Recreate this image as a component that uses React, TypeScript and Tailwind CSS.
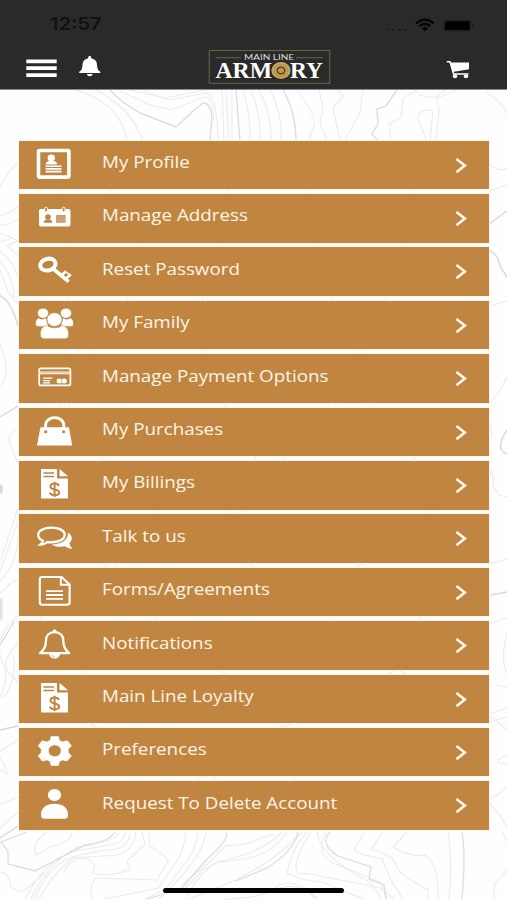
import type { ReactNode } from 'react';

const BROWN = '#c08540';

function Invoice() {
  return (
    <>
      <path d="M41 8H57V17.5H68V37.5H41Z" fill="#fff" />
      <path d="M59.5 8V15.3H68Z" fill="#fff" />
      <path d="M43.5 12H54M43.5 15.5H54" stroke={BROWN} strokeWidth="1.3" />
      <path d="M58.8 24.8C58.2 23.2 56.8 22.6 54.8 22.6C52.2 22.6 50.4 23.6 50.4 25.4C50.4 27.2 52 27.8 54.7 28.4C57.6 29 59.2 29.6 59.2 31.4C59.2 33.2 57.2 34.2 54.6 34.2C52 34.2 50.5 33.2 49.9 31.6M54.6 20.7V36" fill="none" stroke={BROWN} strokeWidth="2" />
    </>
  );
}

const icons: Record<string, ReactNode> = {
  profile: (
    <>
      <rect x="38.500" y="9.500" width="30.400" height="26.600" rx="1" fill="none" stroke="#fff" strokeWidth="3.600" />
      <ellipse cx="51.300" cy="16.900" rx="3.700" ry="3.300" fill="#fff" />
      <path d="M45.600 23.600C45.800 20.600 48 20.200 49.700 20L49.800 18H52.800L53 20C55.500 20.200 57 20.800 57.200 23.600Z" fill="#fff" />
      <path d="M45.600 25.200H61.500M45.600 27.900H61.500M45.600 30.600H61.500" stroke="#fff" strokeWidth="1.600" />
    </>
  ),
  address: (
    <>
      <rect x="39" y="15" width="31.500" height="17.600" rx="2" fill="#fff" />
      <rect x="44.700" y="13.400" width="2.800" height="4.400" rx="1.200" fill={BROWN} stroke="#fff" />
      <rect x="62.200" y="13.400" width="2.800" height="4.400" rx="1.200" fill={BROWN} stroke="#fff" />
      <ellipse cx="48" cy="23" rx="2.800" ry="2.700" fill={BROWN} />
      <path d="M43.600 28.700C44 26 46 26.200 46.800 25.600H49.200C50 26.200 52 26 52.400 28.700Z" fill={BROWN} />
      <rect x="56" y="21" width="9.600" height="7.800" fill="#c99d6b" />
      <path d="M56 23H65.600M56 25H65.600M56 27H65.600" stroke="#d7b48d" strokeWidth=".6" />
    </>
  ),
  key: (
    <g fill="none" stroke="#fff">
      <ellipse cx="47.900" cy="17.600" rx="7.800" ry="5.800" strokeWidth="4" transform="rotate(-15 47.900 17.600)" />
      <path d="M52.500 21.300L68.600 34.600" strokeWidth="3.700" />
      <path d="M61.500 28.200L66 24.400M66 31.500L70.600 27.500" strokeWidth="2.700" />
      <path d="M64.600 24L71.200 28.900" strokeWidth="1.400" />
    </g>
  ),
  family: (
    <g fill="#fff">
      <ellipse cx="43" cy="12.200" rx="5.300" ry="4.800" />
      <ellipse cx="66" cy="12.200" rx="5.300" ry="4.800" />
      <path d="M38.600 17.300C40.800 19 44.500 18.600 46 17L48 25.200H37.500C34.800 25.200 35.300 18.500 38.600 17.300ZM70.400 17.300C68.200 19 64.500 18.600 63 17L61 25.200H71.500C74.200 25.200 73.700 18.500 70.400 17.300Z" />
      <ellipse cx="54.500" cy="18.600" rx="7.700" ry="7" stroke={BROWN} strokeWidth=".9" />
      <path d="M47 24.500C51 27.600 58 27.600 62 24.500C67 25 68.800 29 68.600 33.800C68.500 36.400 67 37.700 65 37.700H44C42 37.700 40.500 36.400 40.400 33.800C40.200 29 42 25 47 24.500Z" stroke={BROWN} strokeWidth=".5" />
    </g>
  ),
  card: (
    <>
      <rect x="39.200" y="14.400" width="31.200" height="17" rx="2" fill="none" stroke="#fff" strokeWidth="1.700" />
      <path d="M39.200 18.900H70.200" stroke="#fff" strokeWidth="2.700" />
      <path d="M39.200 18.900H70.200" stroke={BROWN} strokeWidth=".6" />
      <path d="M43 24.200H52.400M43 26.600H50M43 28.800H50" stroke="#fff" strokeWidth="1.200" />
      <ellipse cx="59.500" cy="26.900" rx="3" ry="2.500" fill="#fff" />
      <ellipse cx="64" cy="26.900" rx="3" ry="2.500" fill="#fff" />
      <path d="M61.700 24.500V29.200" stroke={BROWN} strokeWidth=".6" />
    </>
  ),
  bag: (
    <>
      <path d="M40.500 19.200H69L72.200 37.400H37Z" fill="#fff" />
      <path d="M45.600 23V17.500C45.600 7 63.800 7 63.800 17.500V23" fill="none" stroke="#fff" strokeWidth="2.900" />
      <ellipse cx="45.700" cy="23.700" rx="1.700" ry="1.500" fill={BROWN} />
      <ellipse cx="63.600" cy="23.700" rx="1.700" ry="1.500" fill={BROWN} />
    </>
  ),
  invoice: <Invoice />,
  talk: (
    <>
      <path d="M67.800 18.500C72 21 73.400 25 69.500 29.200C69.600 31.500 71 32.800 72.300 34.600C69.500 35 66.300 33.500 64.800 32.300C60 33.300 54.800 32.800 51.600 30.400C60.500 30.500 69 26.200 67.800 18.500Z" fill="#fff" />
      <path d="M51.200 13.700C43.500 13.700 38.200 16.500 38.200 20.800C38.200 23.400 39.800 25.500 43 26.800C42.800 28.400 41.700 29.500 40.400 30.500C43.500 30.700 46 29.300 47.500 28C58 29.200 64.700 25.600 64.700 20.800C64.700 16.500 59.200 13.700 51.200 13.700Z" fill="none" stroke="#fff" strokeWidth="2.300" />
    </>
  ),
  form: (
    <g fill="none" stroke="#fff">
      <path d="M42 9H61.500L69.600 16.500V34.600Q69.600 36.700 67.200 36.700H42.200Q39.800 36.700 39.800 34.600V11Q39.800 9 42 9Z" strokeWidth="2.100" />
      <path d="M60.800 9.200V16.700H69.500" strokeWidth="1.900" />
      <path d="M46 23.200H63M46 27H63M46 30.800H63" strokeWidth="1.800" />
    </g>
  ),
  bell: (
    <>
      <path d="M54.600 11.100C49 11.100 46 14.800 46 19.200C46 25.400 44.500 28.900 40 32.200H69.200C64.800 28.900 63.300 25.400 63.300 19.200C63.300 14.800 60.300 11.100 54.600 11.100Z" fill="none" stroke="#fff" strokeWidth="2.300" strokeLinejoin="round" />
      <path d="M52.800 11V9.800Q52.800 8.400 54.600 8.400Q56.400 8.400 56.400 9.800V11ZM49.300 33H60C60 35.600 57.700 37.600 54.600 37.600C51.500 37.600 49.300 35.600 49.300 33Z" fill="#fff" />
      <path d="M52 34.200Q52.400 35.600 54.300 35.800" fill="none" stroke={BROWN} strokeWidth=".6" />
    </>
  ),
  gear: (
    <path
      fill="#fff"
      stroke="#fff"
      strokeWidth=".6"
      strokeLinejoin="round"
      fillRule="evenodd"
      d="M51.100 8.400H58.400L59.400 12.400L62.500 13.900L67.300 12.700L71.400 17.800L68.200 21.200V24.500L71.400 27.800L67.300 33L62.500 31.900L59.400 33.400L58.400 37.400H51.100L50.100 33.400L47 31.900L42.200 33L38.200 27.800L41.300 24.500V21.200L38.200 17.800L42.200 12.700L47 13.900L50.100 12.400ZM54.800 16.900C51.200 16.900 48.400 19.500 48.400 22.800C48.400 26.100 51.200 28.700 54.800 28.700C58.400 28.700 61.200 26.100 61.200 22.800C61.200 19.500 58.400 16.900 54.800 16.900Z"
    />
  ),
  person: (
    <g fill="#fff">
      <ellipse cx="54.500" cy="13.900" rx="6.700" ry="6" />
      <path d="M41 34.200C41 26.500 46.500 22.800 54.500 22.800C62.500 22.800 68 26.500 68 34.200Q68 37.700 64.300 37.700H44.700Q41 37.700 41 34.200Z" />
    </g>
  ),
};

const rows = [
  ['profile', 'My Profile'],
  ['address', 'Manage Address'],
  ['key', 'Reset Password'],
  ['family', 'My Family'],
  ['card', 'Manage Payment Options'],
  ['bag', 'My Purchases'],
  ['invoice', 'My Billings'],
  ['talk', 'Talk to us'],
  ['form', 'Forms/Agreements'],
  ['bell', 'Notifications'],
  ['invoice', 'Main Line Loyalty'],
  ['gear', 'Preferences'],
  ['person', 'Request To Delete Account'],
];

function Contours() {
  return (
    <svg className="absolute inset-0" width="507" height="900" viewBox="0 0 507 900" fill="none" stroke="#ebebeb" strokeWidth="1.1">
      {/* top band */}
      <path d="M76 90C100 97 121 112 127 139M96 90C120 103 135 118 143 141M130 90L165 98L205 90M143 90L168 100L207 93Q217 95 218 141M118 90L150 105L171 110L205 97Q213 98 214 120M226 90L229 141M232 90V141M222 90L224 141M243 90Q251 115 250 141M250 90Q261 110 260 141M259 90Q272 115 271 141M270 90Q283 115 281 141M297 90Q318 118 314 125L309 141M319 90L323 107L320 123L327 141M337 90L343 96L333 108L340 141M363 90L360 112L345 141M417 90L403 98L401 117L390 124V141M445 90L435 98L418 95M457 90L437 98L439 110L436 141M432 110Q417 109 418 120L427 141M433 110L430 141M486 92Q504 103 509 118" />
      <path d="M110 90Q122 103 140 113L176 127L192 112L203 103Q211 103 212 118L210 141M236 90L240 141M283 90Q296 112 296 141M397 90L386 106L377 109L378 124L372 134L378 141" stroke="#dddddd" strokeWidth="1.4" />
      {/* left margin */}
      <path d="M-2 188C7 181 6 170 19 162M-2 216Q8 215 19 206M-2 225Q12 226 19 218M0 233L19 241M-2 243L12 238M19 240L7 246L19 257M0 251Q14 262 19 280M0 260Q14 278 14 298M0 270L8 292L19 305M0 344Q10 370 4 382L0 385M19 429Q8 432 9 441L19 466M0 571L18 522M0 582Q18 560 18 538M0 562L18 508M0 594Q12 580 18 580M0 698Q7 685 6 660L19 640M3 698Q18 680 13 655M0 751L18 740M0 758Q4 764 8 774L0 770M0 804L18 797M0 828L18 812" />
      <path d="M-1 295Q11 300 18 326M0 417L18 406M0 645L14 622M0 730L18 726M0 838L18 826" stroke="#d8d8d8" strokeWidth="1.4" />
      <ellipse cx="0" cy="489" rx="3" ry="5" fill="#dadada" stroke="none" />
      <path d="M0 600H1V618H0" stroke="#e2e2e2" strokeWidth="3" />
      {/* right margin */}
      <path d="M489 164Q500 173 507 168M489 191L507 185M489 306L507 301M489 404L500 391L507 377M489 416L492 438M489 468L495 480M492 470L493 486L499 495L507 497M489 564L507 559M489 624L507 618M507 633Q500 660 507 674M497 685L507 688M489 714L507 708M489 722L507 717M507 755Q489 763 507 764M489 803Q502 815 507 829" />
      <path d="M489 224L507 211M489 250Q498 254 500 266L507 277M507 430Q494 450 507 454M491 595L507 592" stroke="#d8d8d8" strokeWidth="1.4" />
      {/* lines that show between the rows */}
      <path d="M216 141Q245 200 212 270T240 430T170 530T220 670T160 830M320 141Q290 240 340 310T270 470T340 590T300 720T330 830M110 190Q170 260 100 340T120 470T60 590T130 740T100 830M400 141Q430 230 380 310T405 450T370 560T440 690T410 830M60 190Q80 350 45 480T70 660T50 780" />
      {/* bottom band */}
      <path d="M72 832Q72 842 53 846L36 855Q32 845 40 838L47 832M125 833Q123 844 109 845L81 850Q48 855 25 899M130 834Q128 850 106 850L80 855Q50 860 35 899M119 833Q112 843 78 847Q50 860 31 899M136 832Q134 850 118 855L73 858Q57 868 39 899M142 832L145 844L127 861L130 869Q110 878 92 873L95 866Q92 858 80 858Q68 862 64 872M149 832V845L163 855L168 861L157 880L95 878Q90 885 91 899M186 832Q184 850 177 861L158 888L105 899M198 832Q195 852 186 862L166 889L145 899M206 832Q205 850 178 880L159 899M287 832Q275 851 249 858L215 863Q193 880 187 899M282 832Q260 854 220 861L203 870L180 893M273 834L246 844L225 846L211 861L182 885M302 832Q285 850 263 865L236 880L190 899M307 832Q291 849 287 873L301 879L325 883L363 899M311 832Q292 860 297 873L310 874L380 888L394 899M317 832Q321 858 370 882L382 899M326 832Q315 855 333 863L355 872L380 882L387 899M364 833L354 849L358 853L382 859L391 880L403 899M382 832L372 849L391 857L401 873Q420 887 428 889L428 899M407 832L393 847Q408 857 425 855Q439 864 438 899M448 832Q453 866 449 899M507 870L494 885V899M0 872Q10 873 10 886L20 892Q27 890 44 873M225 899Q265 899 279 885Q292 880 306 889L318 899M270 892Q297 878 315 899M503 832L507 842" />
      <path d="M115 832Q109 842 85 845L35 871L8 864V851L1 842L27 832M226 832Q230 839 207 859L181 889L147 899M298 832Q295 850 267 868L236 881M330 832Q319 844 338 856L371 867L369 879L384 885L386 899M462 832Q466 855 462 899" stroke="#dddddd" strokeWidth="1.3" />
    </svg>
  );
}

function Header() {
  return (
    <header className="relative h-[90px] border-b border-[#8b8b8b] bg-[#2a2a2a]">
      <div className="flex h-[49px] items-center justify-between pl-[49.500px] pr-[31px]">
        <span className="block w-[46px] origin-left scale-x-[1.180] font-['Inter',sans-serif] text-[17px] font-semibold leading-none text-[#101010]">
          12:57
        </span>
        <svg width="94" height="20" viewBox="382 14 94 20">
          <g fill="#1b1b1b">
            <circle cx="387" cy="29" r="1.1" />
            <circle cx="393" cy="29" r="1.1" />
            <circle cx="399.500" cy="29" r="1.1" />
            <circle cx="405.500" cy="29" r="1.1" />
          </g>
          <path d="M416 22.300Q424.800 15.200 433.800 22.300M419.200 25.200Q424.800 20.800 430.500 25.200" fill="none" stroke="#060606" strokeWidth="2.200" />
          <path d="M421.500 27.200Q424.800 24.700 428.200 27.200L424.800 30.600Z" fill="#060606" />
          <rect x="443.500" y="18.700" width="27.500" height="11.800" rx="3" fill="#202020" />
          <rect x="445" y="20.200" width="24.500" height="8.800" rx="1.500" fill="#000" />
          <path d="M472.500 22.700Q475 24.500 472.500 26.500Z" fill="#171717" />
        </svg>
      </div>
      <div className="flex h-[40px] items-start justify-between pl-[26px] pr-[36px]">
        <div className="flex items-start">
          <svg width="31" height="30" viewBox="26 49 31 30">
            <path d="M26.300 61.300H56.700M26.300 68.200H56.700M26.300 75.200H56.700" stroke="#fff" strokeWidth="3.700" />
          </svg>
          <svg className="ml-[21px]" width="24" height="30" viewBox="78 49 24 30">
            <path d="M88.200 58.200V57.200Q88.200 56 89.700 56Q91.200 56 91.200 57.200V58.200Q97 59.500 97 65Q97 70 100.300 71.700V73H79.200V71.700Q82.500 70 82.500 65Q82.500 59.500 88.200 58.200ZM86.800 74H92.700Q92.300 76.300 89.700 76.300Q87.200 76.300 86.800 74Z" fill="#fff" />
          </svg>
        </div>
        <svg className="mr-[8px]" width="124" height="36" viewBox="208 49 124 36">
          <rect x="209.300" y="50.500" width="120.400" height="32.800" fill="none" stroke="#666146" strokeWidth="1.100" />
          <path d="M215.500 57.700H241M296 57.700H323" stroke="#777052" strokeWidth=".8" />
          <text x="244" y="60" textLength="50" lengthAdjust="spacingAndGlyphs" fontFamily="Lato" fontSize="7" fill="#ddd">MAIN LINE</text>
          <text x="215.500" y="78" textLength="56.500" lengthAdjust="spacingAndGlyphs" fontFamily="Liberation Serif" fontWeight="bold" fontSize="23.500" fill="#fff">ARM</text>
          <text x="290" y="78" textLength="33" lengthAdjust="spacingAndGlyphs" fontFamily="Liberation Serif" fontWeight="bold" fontSize="23.500" fill="#fff">RY</text>
          <ellipse cx="281" cy="70.500" rx="9.600" ry="8.500" fill="#c6a35a" />
          <ellipse cx="281" cy="70.500" rx="6.700" ry="5.900" fill="none" stroke="#a5854a" strokeWidth="1" strokeDasharray="2 .8" />
          <ellipse cx="281" cy="70.500" rx="3.900" ry="3.400" fill="#ba9550" stroke="#47391f" strokeWidth="1.300" />
        </svg>
        <svg width="25" height="31" viewBox="446 49 25 31">
          <path d="M446.800 61.700H450L453.600 74H468.500" fill="none" stroke="#fff" strokeWidth="1.500" />
          <path d="M450.300 62.500H469V69.300L452.500 72Z" fill="#fff" />
          <ellipse cx="455" cy="76.300" rx="2.200" ry="2" fill="#fff" />
          <ellipse cx="466" cy="76.300" rx="2.200" ry="2" fill="#fff" />
        </svg>
      </div>
    </header>
  );
}

export default function App() {
  return (
    <div className="relative flex h-[900px] w-[507px] flex-col overflow-hidden bg-[#fefefe]">
      <Contours />
      <Header />
      <main className="relative flex flex-col gap-[4.9px] pl-[18.700px] pr-[17.800px] pt-[50.700px]">
        {rows.map(([icon, label]) => (
          <div key={label} className="flex h-[48.500px] shrink-0 items-start bg-[#c08540] shadow-[0_0_0_1px_#fdf6ec]">
            <svg className="ml-[16.300px] shrink-0" width="40" height="48.5" viewBox="35 0 40 48.5">
              {icons[icon]}
            </svg>
            <span className="ml-[26.800px] mt-[9.300px] block flex-1 origin-left scale-x-[1.174] whitespace-nowrap font-['Open_Sans','Noto_Sans',sans-serif] text-[16px] leading-[24px] text-[#fff5e8]">
              {label}
            </span>
            <svg className="mr-[22px] shrink-0" width="12" height="48.5" viewBox="456 0 12 48.5">
              <path d="M457.400 18L465.800 24.600L457.400 31.200" fill="none" stroke="#fff8ee" strokeWidth="2.600" />
            </svg>
          </div>
        ))}
      </main>
      <div className="relative mb-[7.500px] mt-auto h-[5px] w-[181px] self-center rounded-full bg-black" />
    </div>
  );
}
